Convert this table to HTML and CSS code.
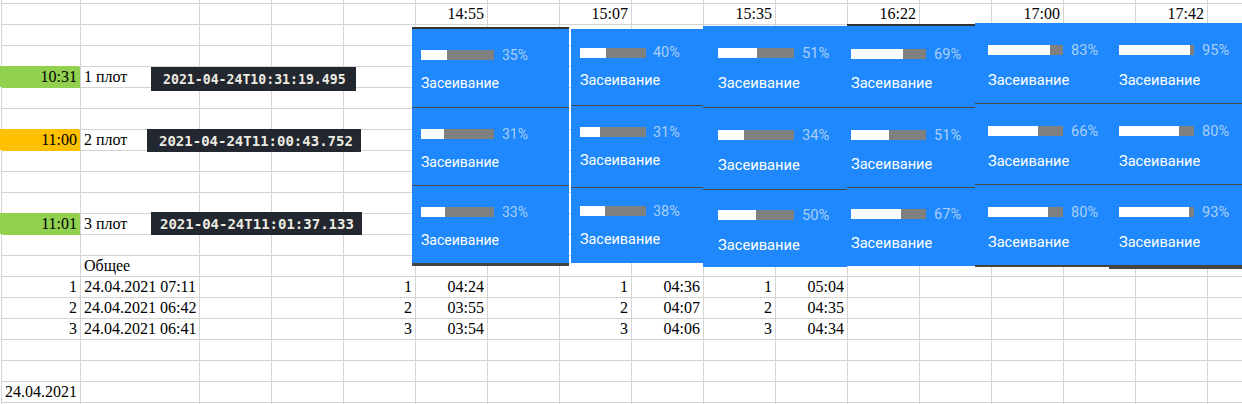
FILE: index.html
```html
<!DOCTYPE html>
<html lang="ru">
<head>
<meta charset="utf-8">
<title>Засеивание</title>
<link rel="stylesheet" href="styles.css">
</head>
<body>
<div class="sheet">
  <!-- row 0 (partial) -->
  <div></div><div></div><div></div><div></div><div></div><div></div><div></div><div></div><div></div><div></div><div></div><div></div><div></div><div></div><div></div><div></div><div></div>
  <!-- row 1 -->
  <div></div><div></div><div></div><div></div><div></div><div class="r">14:55</div><div></div><div class="r">15:07</div><div></div><div class="r">15:35</div><div></div><div class="r">16:22</div><div></div><div class="r">17:00</div><div></div><div class="r">17:42</div><div></div>
  <!-- row 2 -->
  <div></div><div></div><div></div><div></div><div></div><div></div><div></div><div></div><div></div><div></div><div></div><div></div><div></div><div></div><div></div><div></div><div></div>
  <!-- row 3 -->
  <div></div><div></div><div></div><div></div><div></div><div></div><div></div><div></div><div></div><div></div><div></div><div></div><div></div><div></div><div></div><div></div><div></div>
  <!-- row 4 -->
  <div class="r green">10:31</div><div>1 плот</div><div></div><div></div><div></div><div></div><div></div><div></div><div></div><div></div><div></div><div></div><div></div><div></div><div></div><div></div><div></div>
  <!-- row 5 -->
  <div></div><div></div><div></div><div></div><div></div><div></div><div></div><div></div><div></div><div></div><div></div><div></div><div></div><div></div><div></div><div></div><div></div>
  <!-- row 6 -->
  <div></div><div></div><div></div><div></div><div></div><div></div><div></div><div></div><div></div><div></div><div></div><div></div><div></div><div></div><div></div><div></div><div></div>
  <!-- row 7 -->
  <div class="r orange">11:00</div><div>2 плот</div><div></div><div></div><div></div><div></div><div></div><div></div><div></div><div></div><div></div><div></div><div></div><div></div><div></div><div></div><div></div>
  <!-- row 8 -->
  <div></div><div></div><div></div><div></div><div></div><div></div><div></div><div></div><div></div><div></div><div></div><div></div><div></div><div></div><div></div><div></div><div></div>
  <!-- row 9 -->
  <div></div><div></div><div></div><div></div><div></div><div></div><div></div><div></div><div></div><div></div><div></div><div></div><div></div><div></div><div></div><div></div><div></div>
  <!-- row 10 -->
  <div></div><div></div><div></div><div></div><div></div><div></div><div></div><div></div><div></div><div></div><div></div><div></div><div></div><div></div><div></div><div></div><div></div>
  <!-- row 11 -->
  <div class="r green">11:01</div><div>3 плот</div><div></div><div></div><div></div><div></div><div></div><div></div><div></div><div></div><div></div><div></div><div></div><div></div><div></div><div></div><div></div>
  <!-- row 12 -->
  <div></div><div></div><div></div><div></div><div></div><div></div><div></div><div></div><div></div><div></div><div></div><div></div><div></div><div></div><div></div><div></div><div></div>
  <!-- row 13 -->
  <div></div><div>Общее</div><div></div><div></div><div></div><div></div><div></div><div></div><div></div><div></div><div></div><div></div><div></div><div></div><div></div><div></div><div></div>
  <!-- row 14 -->
  <div class="r">1</div><div class="r">24.04.2021 07:11</div><div></div><div></div><div class="r">1</div><div class="r">04:24</div><div></div><div class="r">1</div><div class="r">04:36</div><div class="r">1</div><div class="r">05:04</div><div></div><div></div><div></div><div></div><div></div><div></div>
  <!-- row 15 -->
  <div class="r">2</div><div class="r">24.04.2021 06:42</div><div></div><div></div><div class="r">2</div><div class="r">03:55</div><div></div><div class="r">2</div><div class="r">04:07</div><div class="r">2</div><div class="r">04:35</div><div></div><div></div><div></div><div></div><div></div><div></div>
  <!-- row 16 -->
  <div class="r">3</div><div class="r">24.04.2021 06:41</div><div></div><div></div><div class="r">3</div><div class="r">03:54</div><div></div><div class="r">3</div><div class="r">04:06</div><div class="r">3</div><div class="r">04:34</div><div></div><div></div><div></div><div></div><div></div><div></div>
  <!-- row 17 -->
  <div></div><div></div><div></div><div></div><div></div><div></div><div></div><div></div><div></div><div></div><div></div><div></div><div></div><div></div><div></div><div></div><div></div>
  <!-- row 18 -->
  <div></div><div></div><div></div><div></div><div></div><div></div><div></div><div></div><div></div><div></div><div></div><div></div><div></div><div></div><div></div><div></div><div></div>
  <!-- row 19 -->
  <div class="r">24.04.2021</div><div></div><div></div><div></div><div></div><div></div><div></div><div></div><div></div><div></div><div></div><div></div><div></div><div></div><div></div><div></div><div></div>
  <!-- row 20 (partial) -->
  <div></div><div></div><div></div><div></div><div></div><div></div><div></div><div></div><div></div><div></div><div></div><div></div><div></div><div></div><div></div><div></div><div></div>
</div>

<!-- pasted timestamp badges -->
<div class="badge b1">2021-04-24T10:31:19.495</div>
<div class="badge b2">2021-04-24T11:00:43.752</div>
<div class="badge b3">2021-04-24T11:01:37.133</div>

<!-- pasted progress panels -->
<div class="panel p1">
  <div class="sec"><div class="meter"><div class="bar"><div class="fill" style="width:35%"></div></div><span class="pct">35%</span></div><div class="label">Засеивание</div></div>
  <div class="sec"><div class="meter"><div class="bar"><div class="fill" style="width:31%"></div></div><span class="pct">31%</span></div><div class="label">Засеивание</div></div>
  <div class="sec"><div class="meter"><div class="bar"><div class="fill" style="width:33%"></div></div><span class="pct">33%</span></div><div class="label">Засеивание</div></div>
</div>
<div class="panel p2">
  <div class="sec"><div class="meter"><div class="bar"><div class="fill" style="width:40%"></div></div><span class="pct">40%</span></div><div class="label">Засеивание</div></div>
  <div class="sec"><div class="meter"><div class="bar"><div class="fill" style="width:31%"></div></div><span class="pct">31%</span></div><div class="label">Засеивание</div></div>
  <div class="sec"><div class="meter"><div class="bar"><div class="fill" style="width:38%"></div></div><span class="pct">38%</span></div><div class="label">Засеивание</div></div>
</div>
<div class="panel p3">
  <div class="sec"><div class="meter"><div class="bar"><div class="fill" style="width:51%"></div></div><span class="pct">51%</span></div><div class="label">Засеивание</div></div>
  <div class="sec"><div class="meter"><div class="bar"><div class="fill" style="width:34%"></div></div><span class="pct">34%</span></div><div class="label">Засеивание</div></div>
  <div class="sec"><div class="meter"><div class="bar"><div class="fill" style="width:50%"></div></div><span class="pct">50%</span></div><div class="label">Засеивание</div></div>
</div>
<div class="panel p4">
  <div class="sec"><div class="meter"><div class="bar"><div class="fill" style="width:69%"></div></div><span class="pct">69%</span></div><div class="label">Засеивание</div></div>
  <div class="sec"><div class="meter"><div class="bar"><div class="fill" style="width:51%"></div></div><span class="pct">51%</span></div><div class="label">Засеивание</div></div>
  <div class="sec"><div class="meter"><div class="bar"><div class="fill" style="width:67%"></div></div><span class="pct">67%</span></div><div class="label">Засеивание</div></div>
</div>
<div class="panel p5">
  <div class="sec"><div class="meter"><div class="bar"><div class="fill" style="width:83%"></div></div><span class="pct">83%</span></div><div class="label">Засеивание</div></div>
  <div class="sec"><div class="meter"><div class="bar"><div class="fill" style="width:66%"></div></div><span class="pct">66%</span></div><div class="label">Засеивание</div></div>
  <div class="sec"><div class="meter"><div class="bar"><div class="fill" style="width:80%"></div></div><span class="pct">80%</span></div><div class="label">Засеивание</div></div>
</div>
<div class="panel p6">
  <div class="sec"><div class="meter"><div class="bar"><div class="fill" style="width:95%"></div></div><span class="pct">95%</span></div><div class="label">Засеивание</div></div>
  <div class="sec"><div class="meter"><div class="bar"><div class="fill" style="width:80%"></div></div><span class="pct">80%</span></div><div class="label">Засеивание</div></div>
  <div class="sec"><div class="meter"><div class="bar"><div class="fill" style="width:93%"></div></div><span class="pct">93%</span></div><div class="label">Засеивание</div></div>
</div>
</body>
</html>
```

FILE: styles.css
```css
html, body {
  margin: 0;
  padding: 0;
  background: #ffffff;
}

body {
  position: relative;
  width: 1242px;
  height: 404px;
  overflow: hidden;
  font-family: "Liberation Serif", "Times New Roman", serif;
  font-size: 16px;
  color: #000;
}

/* ---------- spreadsheet grid ---------- */
.sheet {
  display: grid;
  grid-template-columns: 79px 119px repeat(15, 72px);
  grid-template-rows: 4px repeat(20, 21px);
  margin-left: 1px;
  border-left: 1px solid #d4d4d4;
  width: max-content;
}

.sheet > div {
  box-sizing: border-box;
  border-right: 1px solid #d4d4d4;
  border-bottom: 1px solid #d4d4d4;
  padding: 0 3px;
  line-height: 20px;
  white-space: nowrap;
  overflow: visible;
}

.sheet > .r {
  text-align: right;
}

.sheet > .green {
  background: #92d050;
  border-bottom-color: #92d050;
  box-shadow: -2px -1px 0 #92d050;
}

.sheet > .orange {
  background: #ffc000;
  border-bottom-color: #ffc000;
  box-shadow: -2px -1px 0 #ffc000;
}

/* ---------- pasted timestamp badges ---------- */
.badge {
  position: absolute;
  box-sizing: border-box;
  display: flex;
  align-items: center;
  background: #23272f;
  color: #ecebe2;
  font-family: "DejaVu Sans Mono", "Liberation Mono", monospace;
  font-weight: bold;
  white-space: nowrap;
}

.b1 {
  left: 151px;
  top: 67px;
  width: 205px;
  height: 24px;
  padding-left: 12px;
  font-size: 13.2px;
}

.b2 {
  left: 147px;
  top: 129px;
  width: 214px;
  height: 23px;
  padding-left: 12px;
  font-size: 14px;
}

.b3 {
  left: 151px;
  top: 212px;
  width: 211px;
  height: 23px;
  padding-left: 9px;
  font-size: 14px;
}

/* ---------- pasted progress panels ---------- */
.panel {
  position: absolute;
  display: grid;
  row-gap: 1px;
  background: #474a4f;
  font-family: Roboto, "Noto Sans", sans-serif;
  --pl: 9px;
  --bw: 75px;
  --fs: 14.6px;
  --gap: 12px;
  --mg: 8px;
  --pt: 2px;
  --pb: 0px;
}

.sec {
  background: #1e88fc;
  display: flex;
  flex-direction: column;
  justify-content: center;
  gap: var(--gap);
  padding: var(--pt) 0 var(--pb) var(--pl);
  overflow: hidden;
}

.meter {
  display: flex;
  align-items: center;
  gap: var(--mg);
}

.bar {
  flex: none;
  width: var(--bw);
  height: 10px;
  background: #808080;
}

.fill {
  height: 100%;
  background: #ffffff;
}

.pct {
  color: #a9cff7;
  font-size: var(--fs);
  white-space: nowrap;
}

.label {
  color: #ffffff;
  font-size: var(--fs);
  line-height: 16px;
  white-space: nowrap;
}

.p1 {
  left: 412px;
  top: 27px;
  width: 157px;
  grid-template-rows: 78px 77px 77px;
  border-top: 2px solid #333333;
  border-bottom: 3px solid #444444;
  --pl: 9px;
  --bw: 73px;
  --fs: 14px;
}

.p2 {
  left: 571px;
  top: 29px;
  width: 132px;
  grid-template-rows: 76px 81px 75px;
  --pl: 9px;
  --bw: 66px;
  --fs: 14.4px;
  --mg: 7px;
  --pt: 0px;
  --pb: 1px;
}

.p3 {
  left: 703px;
  top: 26px;
  width: 144px;
  grid-template-rows: 81px 81px 77px;
  --pl: 15px;
  --bw: 76px;
  --fs: 14.7px;
  --gap: 13px;
}

.p4 {
  left: 847px;
  top: 24px;
  width: 128px;
  grid-template-rows: 81px 79px 78px;
  border-top: 2px solid #333333;
  --pl: 4px;
  --bw: 75px;
}

.p5 {
  left: 975px;
  top: 23px;
  width: 134px;
  grid-template-rows: 80px 80px 80px;
  border-bottom: 2px solid #444444;
  --pl: 13px;
  --gap: 13px;
}

.p6 {
  left: 1109px;
  top: 23px;
  width: 140px;
  grid-template-rows: 80px 80px 80px;
  border-bottom: 4px solid #444444;
  --pl: 10px;
  --gap: 13px;
}
```
